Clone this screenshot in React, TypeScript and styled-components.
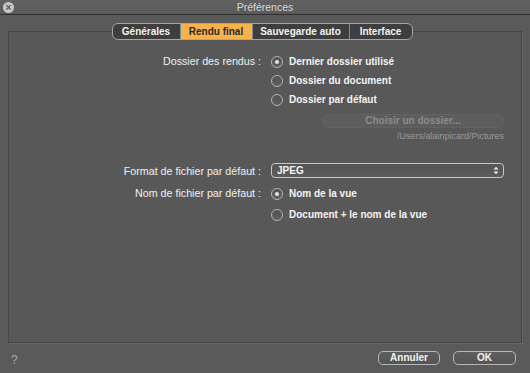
import React from "react";
import styled, { createGlobalStyle } from "styled-components";

const GlobalStyle = createGlobalStyle`
  html, body {
    margin: 0;
    padding: 0;
    background: #5a5a5a;
  }
  body {
    font-family: "Liberation Sans", Arial, sans-serif;
  }
`;

const Window = styled.div`
  width: 530px;
  height: 373px;
  display: flex;
  flex-direction: column;
  background: #5a5a5a;
  color: #f2f2f2;
  overflow: hidden;
`;

const TitleBar = styled.div`
  height: 14px;
  display: grid;
  grid-template-columns: 30px 1fr 30px;
  align-items: center;
  background: linear-gradient(#626262, #5a5a5a);
  border-bottom: 1px solid #2f2f2f;
`;

const CloseButton = styled.div`
  width: 11px;
  height: 11px;
  margin-left: 3px;
  border-radius: 50%;
  background: #c9c9c9;
  color: #555;
  font-size: 10px;
  font-weight: bold;
  line-height: 11px;
  text-align: center;
`;

const Title = styled.div`
  text-align: center;
  font-size: 10.5px;
  color: #d8d8d8;
`;

const Body = styled.div`
  flex: 1;
  display: flex;
  flex-direction: column;
  padding: 0 8px;
`;

const TabBar = styled.div`
  position: relative;
  z-index: 1;
  align-self: center;
  display: flex;
  margin: 8px 0 -9px -6px;
  height: 15px;
  border: 1px solid #a6a6a6;
  border-radius: 6px;
  overflow: hidden;
  background: #3e3e3e;
`;

const Tab = styled.div<{ $w: number; $active?: boolean }>`
  width: ${(p) => p.$w}px;
  display: flex;
  align-items: center;
  justify-content: center;
  font-size: 10px;
  font-weight: bold;
  color: ${(p) => (p.$active ? "#2a2a2a" : "#f2f2f2")};
  background: ${(p) => (p.$active ? "#f8b24c" : "transparent")};
  & + & {
    border-left: 1px solid #8a8a8a;
  }
`;

const GroupBox = styled.div`
  height: 312px;
  box-sizing: border-box;
  border: 1px solid #474747;
  box-shadow: 1px 1px 0 #676767;
  background: #585858;
  padding-top: 23px;
`;

const Form = styled.div`
  display: grid;
  grid-template-columns: 252px 1fr;
  column-gap: 10px;
  padding-right: 17px;
`;

const Label = styled.div<{ $mt?: number }>`
  text-align: right;
  font-size: 10.7px;
  height: 13px;
  line-height: 13px;
  color: #f0f0f0;
  margin-top: ${(p) => p.$mt ?? 0}px;
`;

const Controls = styled.div<{ $mt?: number }>`
  display: flex;
  flex-direction: column;
  margin-top: ${(p) => p.$mt ?? 0}px;
`;

const RadioRow = styled.div<{ $gap?: number }>`
  display: flex;
  align-items: center;
  gap: 6px;
  height: 13px;
  margin-bottom: ${(p) => p.$gap ?? 6}px;
  font-size: 10px;
  font-weight: bold;
  color: #f4f4f4;
`;

const RadioCircle = styled.span<{ $checked?: boolean }>`
  width: 10px;
  height: 10px;
  border-radius: 50%;
  border: 1px solid #b4b4b4;
  background: linear-gradient(#515151, #606060);
  display: flex;
  align-items: center;
  justify-content: center;
  &::after {
    content: "";
    display: ${(p) => (p.$checked ? "block" : "none")};
    width: 4px;
    height: 4px;
    border-radius: 50%;
    background: #e4e4e4;
  }
`;

const ChooseButton = styled.div`
  margin-left: 51px;
  height: 12px;
  border: 1px solid #626262;
  border-radius: 6px;
  background: #5d5d5d;
  color: #8c8c8c;
  font-size: 10px;
  font-weight: bold;
  line-height: 12px;
  text-align: center;
`;

const PathText = styled.div`
  margin-top: 3px;
  text-align: right;
  font-size: 9px;
  color: #9a9a9a;
`;

const Select = styled.div`
  height: 13px;
  box-sizing: content-box;
  border: 1px solid #c8c8c8;
  border-radius: 4px;
  background: linear-gradient(#555, #5c5c5c);
  display: flex;
  align-items: center;
  justify-content: space-between;
  padding: 0 4px 0 5px;
  font-size: 10px;
  font-weight: bold;
  color: #f4f4f4;
`;

const Arrows = styled.svg`
  width: 6px;
  height: 9px;
`;

const Footer = styled.div`
  height: 30px;
  display: flex;
  align-items: center;
  padding: 0 6px 0 3px;
  gap: 13px;
`;

const Help = styled.div`
  flex: 1;
  font-size: 12px;
  color: #a8a8a8;
  margin-top: 3px;
`;

const Button = styled.div<{ $w: number }>`
  width: ${(p) => p.$w}px;
  height: 12px;
  border: 1px solid #b8b8b8;
  border-radius: 5px;
  background: linear-gradient(#5e5e5e, #555);
  color: #f4f4f4;
  font-size: 10px;
  font-weight: bold;
  line-height: 12px;
  text-align: center;
`;

export default function App() {
  return (
    <Window>
      <GlobalStyle />
      <TitleBar>
        <CloseButton>×</CloseButton>
        <Title>Préférences</Title>
        <span />
      </TitleBar>
      <Body>
        <TabBar>
          <Tab $w={67}>Générales</Tab>
          <Tab $w={71} $active>
            Rendu final
          </Tab>
          <Tab $w={96}>Sauvegarde auto</Tab>
          <Tab $w={62}>Interface</Tab>
        </TabBar>
        <GroupBox>
          <Form>
            <Label>Dossier des rendus :</Label>
            <Controls>
              <RadioRow>
                <RadioCircle $checked />
                Dernier dossier utilisé
              </RadioRow>
              <RadioRow>
                <RadioCircle />
                Dossier du document
              </RadioRow>
              <RadioRow $gap={8}>
                <RadioCircle />
                Dossier par défaut
              </RadioRow>
              <ChooseButton>Choisir un dossier...</ChooseButton>
              <PathText>/Users/alainpicard/Pictures</PathText>
            </Controls>

            <Label $mt={24}>Format de fichier par défaut :</Label>
            <Controls $mt={22}>
              <Select>
                JPEG
                <Arrows viewBox="0 0 6 9">
                  <path d="M0.5 3.5 L3 0.8 L5.5 3.5 Z" fill="#eee" />
                  <path d="M0.5 5.5 L3 8.2 L5.5 5.5 Z" fill="#eee" />
                </Arrows>
              </Select>
            </Controls>

            <Label $mt={9}>Nom de fichier par défaut :</Label>
            <Controls $mt={9}>
              <RadioRow $gap={8}>
                <RadioCircle $checked />
                Nom de la vue
              </RadioRow>
              <RadioRow>
                <RadioCircle />
                Document + le nom de la vue
              </RadioRow>
            </Controls>
          </Form>
        </GroupBox>
        <Footer>
          <Help>?</Help>
          <Button $w={60}>Annuler</Button>
          <Button $w={61}>OK</Button>
        </Footer>
      </Body>
    </Window>
  );
}
